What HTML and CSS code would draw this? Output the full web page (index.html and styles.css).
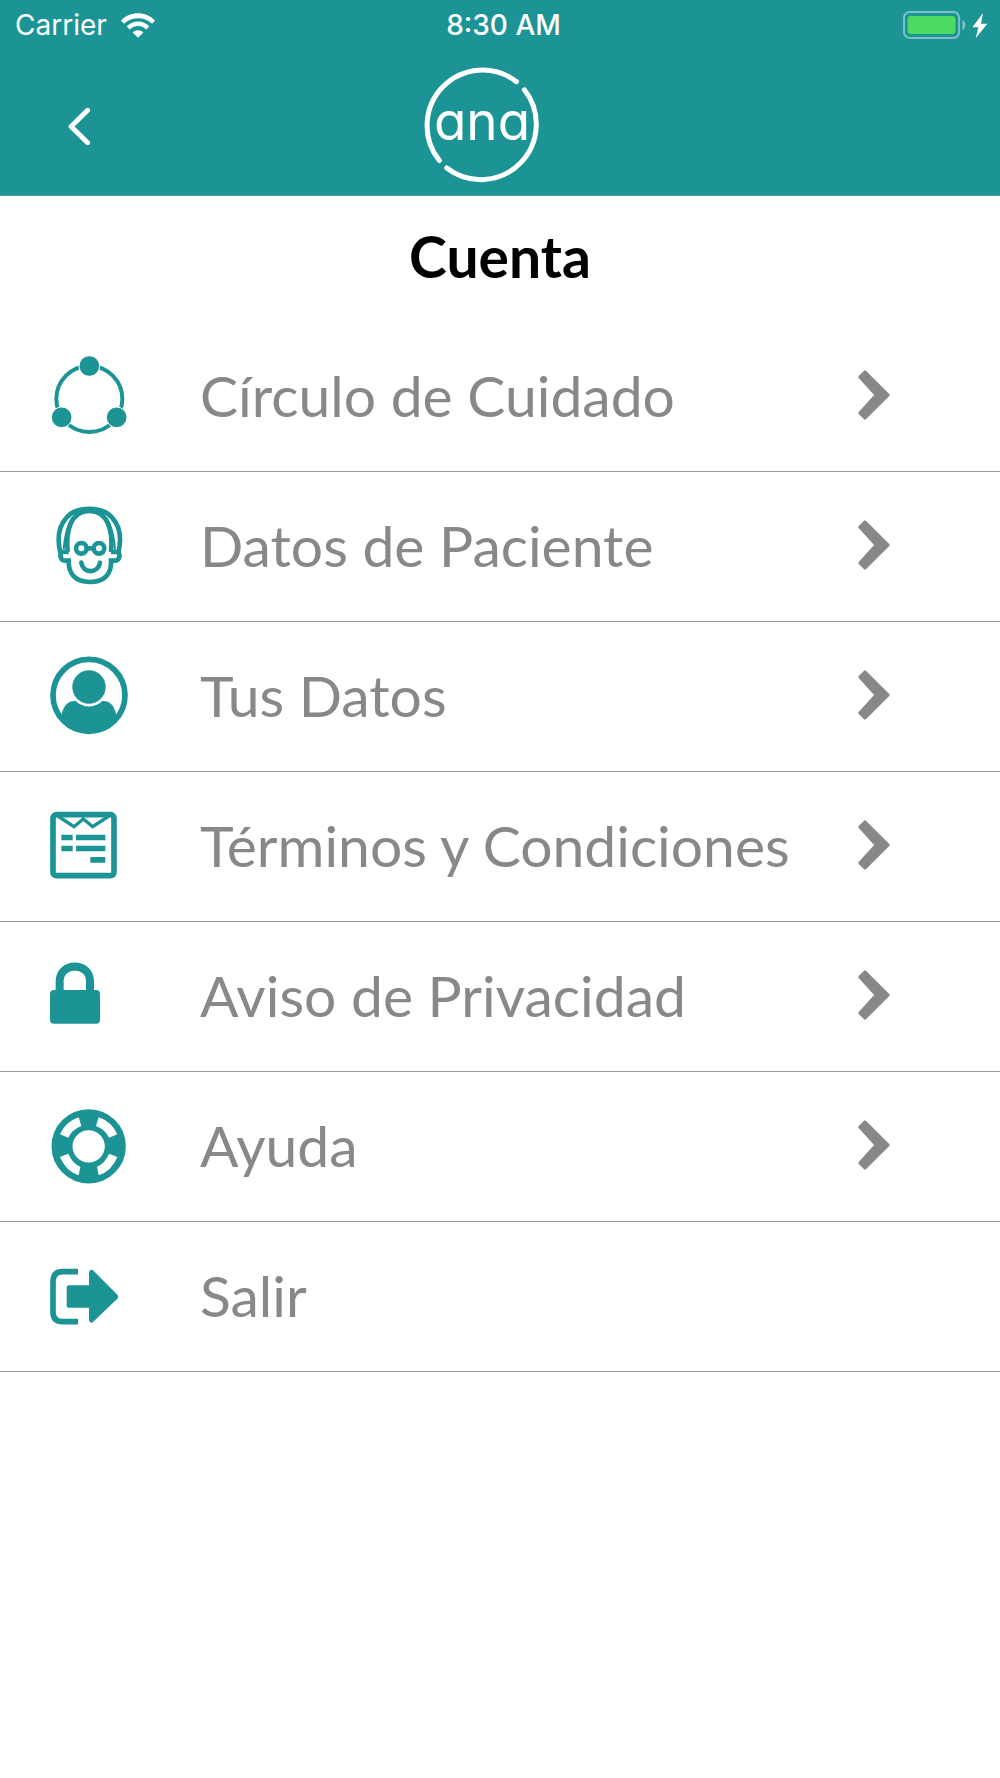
FILE: index.html
```html
<!DOCTYPE html>
<html lang="es">
<head>
<meta charset="utf-8">
<meta name="viewport" content="width=device-width, initial-scale=1">
<title>Cuenta</title>
<link rel="stylesheet" href="styles.css">
</head>
<body>
<header class="top">
  <div class="status">
    <div class="status-left">
      <span>Carrier</span>
      <svg class="wifi" viewBox="0 0 102 74" aria-hidden="true">
        <path d="M0 22C28-7 74-7 102 22L93 32C69 10 33 10 9 32Z"/>
        <path d="M17 39C36 20 66 20 85 39L76 49C61 35 41 35 26 49Z"/>
        <path d="M35 58C44 49 58 49 67 58L51 74Z"/>
      </svg>
    </div>
    <span class="clock">8:30 AM</span>
    <div class="status-right">
      <svg class="battery" viewBox="0 0 256 84" aria-hidden="true">
        <rect class="battery-case" x="3" y="3" width="166" height="78" rx="17"/>
        <rect class="battery-level" x="14" y="15" width="144" height="54" rx="9"/>
        <path class="battery-tip" d="M179 27C191 32 191 53 179 58Z"/>
        <path class="bolt" d="M241 6L209 49H227L219 82L254 38H235Z"/>
      </svg>
    </div>
  </div>
  <div class="bar">
    <button class="back" type="button" aria-label="Atrás">
      <svg viewBox="0 0 66 112" aria-hidden="true"><path d="M59 7L9 56L59 105"/></svg>
    </button>
    <svg class="logo" viewBox="0 0 116 116" role="img" aria-label="ana">
      <path d="M92.500 14.700A55.500 55.500 0 0 0 15.400 93.500"/>
      <path d="M22.800 101A55.500 55.500 0 0 0 100.400 22.800"/>
      <text x="58" y="73" text-anchor="middle">ana</text>
    </svg>
  </div>
</header>
<main>
  <h1 class="title">Cuenta</h1>
  <nav aria-label="Cuenta">
    <ul class="menu">
      <li><a class="item" href="#circulo">
        <svg class="icon" viewBox="60 45 240 240" aria-hidden="true">
          <circle class="line" cx="178" cy="177" r="99" stroke-width="12"/>
          <g class="halo"><circle cx="178" cy="78" r="31"/><circle cx="95" cy="232" r="31"/><circle cx="260" cy="232" r="31"/></g>
        </svg>
        <span class="label">Círculo de Cuidado</span>
        <svg class="arrow" viewBox="0 0 96 150" aria-hidden="true"><path d="M21 5L91 75L21 145L5 129L54 75L5 21Z"/></svg>
      </a></li>
      <li><a class="item" href="#paciente">
        <svg class="icon" viewBox="60 46 240 240" aria-hidden="true">
          <g class="line" stroke-width="14">
            <path d="M91 190C80 142 88 108 108 86C136 48 220 48 248 86C268 108 276 142 265 190"/>
            <path d="M113 187C107 126 121 64 178 64C235 64 249 126 243 187"/>
            <path d="M101 180C103 150 107 115 127 84M255 180C253 150 249 115 229 84" stroke-width="6"/>
            <path d="M116 187H93C88 202 95 213 105 213H116C115 252 135 277 180 277C225 277 245 252 243 213H254C266 213 272 202 266 187H243"/>
            <circle cx="154" cy="176" r="16"/><circle cx="207" cy="176" r="16"/><path d="M170 176H191"/>
            <path d="M154 219C159 253 203 253 210 219" stroke-linecap="round"/>
          </g>
        </svg>
        <span class="label">Datos de Paciente</span>
        <svg class="arrow" viewBox="0 0 96 150" aria-hidden="true"><path d="M21 5L91 75L21 145L5 129L54 75L5 21Z"/></svg>
      </a></li>
      <li><a class="item" href="#datos">
        <svg class="icon" viewBox="60 47 240 240" aria-hidden="true">
          <circle class="line" cx="177" cy="168" r="108" stroke-width="17"/>
          <circle cx="177" cy="143" r="50"/>
          <path d="M94 228C101 197 114 184 137 185C160 207 194 207 217 185C240 184 253 197 259 228C221 292 133 292 94 228Z"/>
        </svg>
        <span class="label">Tus Datos</span>
        <svg class="arrow" viewBox="0 0 96 150" aria-hidden="true"><path d="M21 5L91 75L21 145L5 129L54 75L5 21Z"/></svg>
      </a></li>
      <li><a class="item" href="#terminos">
        <svg class="icon" viewBox="60 47 240 240" aria-hidden="true">
          <rect class="line" x="69" y="76" width="183" height="183" rx="10" stroke-width="17"/>
          <path class="line" d="M83 80L132 112L160 89L188 112L237 80" stroke-width="10"/>
          <path d="M94 136h34v17H94zM138 136h88v17h-88zM94 169h34v17H94zM138 169h88v17h-88zM181 203h45v17h-45z"/>
        </svg>
        <span class="label">Términos y Condiciones</span>
        <svg class="arrow" viewBox="0 0 96 150" aria-hidden="true"><path d="M21 5L91 75L21 145L5 129L54 75L5 21Z"/></svg>
      </a></li>
      <li><a class="item" href="#privacidad">
        <svg class="icon" viewBox="60 47 240 240" aria-hidden="true">
          <rect x="60" y="152" width="150" height="101" rx="12"/>
          <path class="line" d="M89 156V126C89 67 180 67 180 126V156" stroke-width="24"/>
        </svg>
        <span class="label">Aviso de Privacidad</span>
        <svg class="arrow" viewBox="0 0 96 150" aria-hidden="true"><path d="M21 5L91 75L21 145L5 129L54 75L5 21Z"/></svg>
      </a></li>
      <li><a class="item" href="#ayuda">
        <svg class="icon" viewBox="60 47 240 240" aria-hidden="true">
          <circle class="line" cx="176" cy="171" r="80" stroke-width="63"/>
          <g class="cut">
            <path d="M146 84L154 110Q127 120 115 145L90 135Q107 97 146 84Z"/>
            <path d="M206 84L198 110Q225 120 237 145L262 135Q245 97 206 84Z"/>
            <path d="M146 258L151 232Q127 222 115 193L90 203Q107 245 146 258Z"/>
            <path d="M206 258L201 232Q225 222 237 193L262 203Q245 245 206 258Z"/>
          </g>
        </svg>
        <span class="label">Ayuda</span>
        <svg class="arrow" viewBox="0 0 96 150" aria-hidden="true"><path d="M21 5L91 75L21 145L5 129L54 75L5 21Z"/></svg>
      </a></li>
      <li><a class="item" href="#salir">
        <svg class="icon" viewBox="60 48 240 240" aria-hidden="true">
          <path class="line" d="M144 98H98Q69 98 69 127V219Q69 248 98 248H144" stroke-width="17"/>
          <path d="M116 139H177V100Q180 89 189 94L262 167Q267 173 262 179L189 249Q180 255 177 244V206H116Q110 206 110 200V145Q110 139 116 139Z"/>
        </svg>
        <span class="label">Salir</span>
      </a></li>
    </ul>
  </nav>
</main>
</body>
</html>
```
FILE: styles.css
```css
* { box-sizing: border-box; }

body {
  margin: 0;
  background: #fff;
  color: #000;
  font-family: Lato, "Open Sans", sans-serif;
}

svg { display: block; }

.top {
  background: #1c9495;
  color: #fff;
  border-bottom: 1px solid #49a9aa;
}

.status {
  display: grid;
  grid-template-columns: 1fr auto 1fr;
  align-items: center;
  height: 50px;
  padding: 0 12px 0 15px;
  font: 400 28px/50px Inter, "Liberation Sans", sans-serif;
}

.status-left {
  display: flex;
  align-items: center;
  gap: 14px;
}

.status-right {
  display: flex;
  justify-content: flex-end;
}

.wifi { width: 34px; height: 25px; fill: #fff; }
.clock { padding-left: 4px; font-weight: 500; }
.battery { width: 85px; height: 28px; }
.battery-case { fill: none; stroke: #7dc1c2; stroke-width: 6; }
.battery-level { fill: #4cd964; }
.battery-tip { fill: #7dc1c2; }
.bolt { fill: #fff; }

.bar {
  display: grid;
  grid-template-columns: 1fr auto 1fr;
  align-items: center;
  height: 145px;
  padding: 4px 36px 0 0;
}

.back {
  justify-self: start;
  margin: 0;
  padding: 4px 20px 0 68px;
  border: 0;
  background: none;
  cursor: pointer;
}

.back svg {
  width: 22px;
  height: 37px;
  fill: none;
  stroke: #fff;
  stroke-width: 15;
  stroke-linecap: round;
  stroke-linejoin: round;
}

.logo { width: 116px; height: 116px; }

.logo path {
  fill: none;
  stroke: #fff;
  stroke-width: 5;
  stroke-linecap: round;
}

.logo text {
  fill: #fff;
  font: 400 53px Inter, sans-serif;
  font-feature-settings: "cv11";
}

.title {
  margin: 0;
  padding: 28px 0 34px;
  font-size: 57px;
  font-weight: 700;
  line-height: 64px;
  text-align: center;
}

.menu {
  margin: 0;
  padding: 0;
  list-style: none;
}

.item {
  display: flex;
  align-items: center;
  height: 150px;
  padding: 0 110px 4px 50px;
  border-bottom: 1px solid #9b9b9b;
  color: #888;
  font-size: 57px;
  line-height: 64px;
  text-decoration: none;
}

.icon {
  flex: none;
  width: 80px;
  height: 80px;
  margin-right: 70px;
  fill: #1c9495;
}

.line { fill: none; stroke: #1c9495; }
.halo { stroke: #fff; stroke-width: 3; }
.cut { fill: #fff; }

.label {
  flex: 1;
  white-space: nowrap;
}

.arrow {
  flex: none;
  width: 32px;
  height: 50px;
  fill: #888;
  stroke: #888;
  stroke-width: 8;
  stroke-linejoin: round;
}
```
